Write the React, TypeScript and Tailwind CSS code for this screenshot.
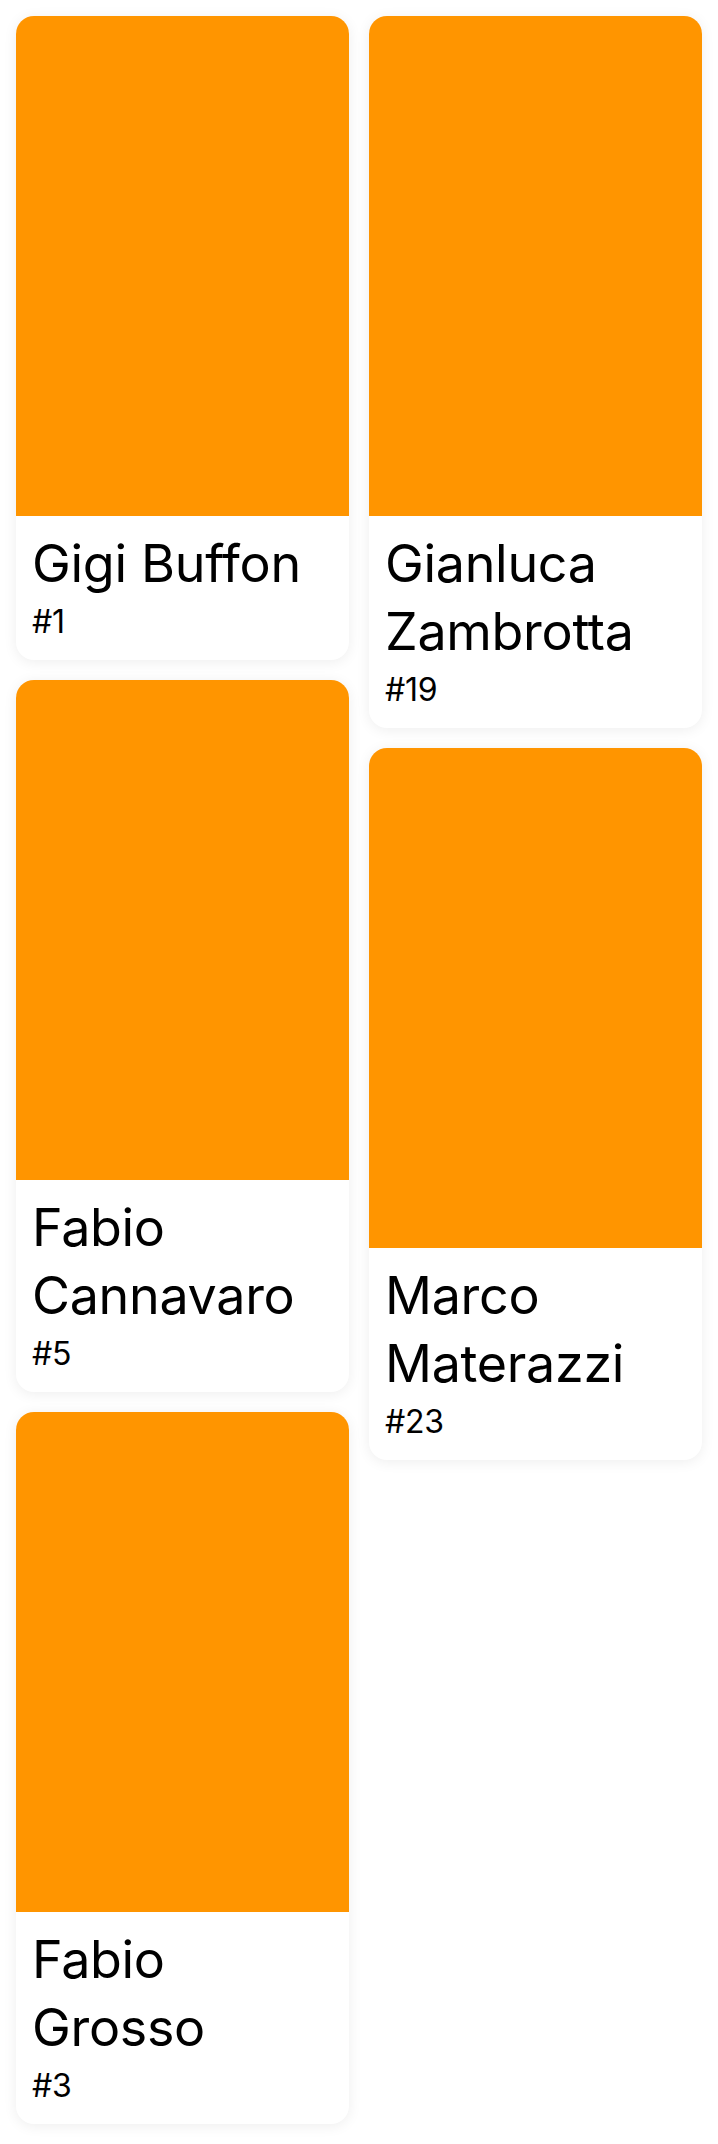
import React from 'react';

type Player = { name: string; number: number };

const leftColumn: Player[] = [
  { name: 'Gigi Buffon', number: 1 },
  { name: 'Fabio Cannavaro', number: 5 },
  { name: 'Fabio Grosso', number: 3 },
];

const rightColumn: Player[] = [
  { name: 'Gianluca Zambrotta', number: 19 },
  { name: 'Marco Materazzi', number: 23 },
];

function PlayerCard({ player }: { player: Player }) {
  return (
    <div className="bg-white rounded-[18px] overflow-hidden shadow-[0_2px_14px_rgba(0,0,0,0.07)]">
      <div className="h-[500px] bg-[#ff9500]" />
      <div className="px-4 pt-[14px] pb-[18px]">
        <p className="text-[52px] leading-[68px] tracking-[-0.3px] text-black">{player.name}</p>
        <p className="mt-1 text-[32px] leading-[40px] tracking-[-0.3px] text-black">#{player.number}</p>
      </div>
    </div>
  );
}

export default function App() {
  return (
    <div className="min-h-[2144px] bg-white p-4 font-['Inter',sans-serif]">
      <div className="flex gap-5 items-start">
        <div className="flex-1 flex flex-col gap-5">
          {leftColumn.map((p) => (
            <PlayerCard key={p.number} player={p} />
          ))}
        </div>
        <div className="flex-1 flex flex-col gap-5">
          {rightColumn.map((p) => (
            <PlayerCard key={p.number} player={p} />
          ))}
        </div>
      </div>
    </div>
  );
}
